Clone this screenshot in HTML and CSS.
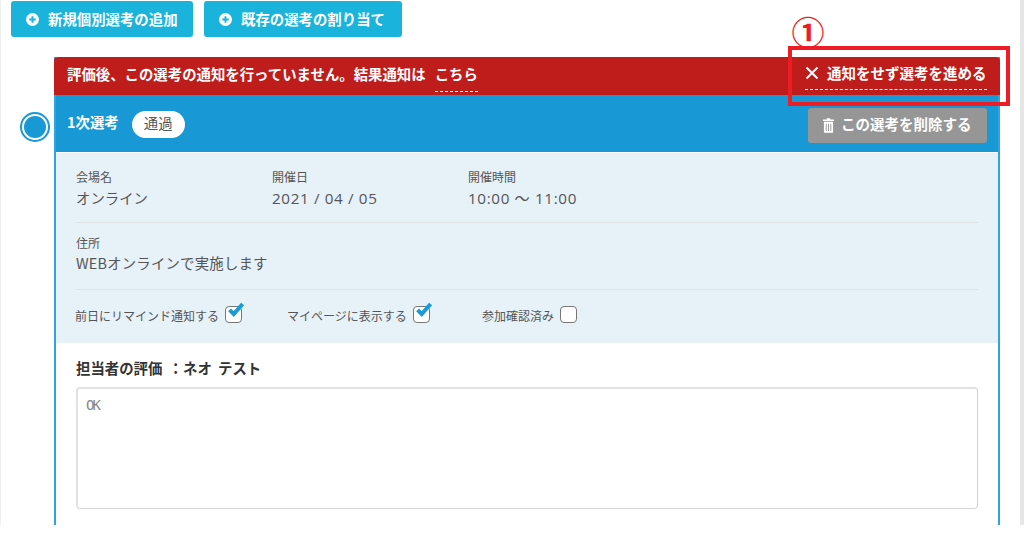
FILE: index.html
```html
<!DOCTYPE html>
<html lang="ja">
<head>
<meta charset="utf-8">
<title>選考</title>
<link rel="stylesheet" href="styles.css">
</head>
<body>
<div class="shot">
  <main class="page">
    <div class="actions">
      <button class="add-btn add-btn-first"><svg class="plus" viewBox="0 0 12 12"><circle cx="6" cy="6" r="6" fill="#fff"/><path d="M6 3v6M3 6h6" stroke="#1ab3dc" stroke-width="1.8"/></svg>新規個別選考の追加</button>
      <button class="add-btn add-btn-second"><svg class="plus" viewBox="0 0 12 12"><circle cx="6" cy="6" r="6" fill="#fff"/><path d="M6 3v6M3 6h6" stroke="#1ab3dc" stroke-width="1.8"/></svg>既存の選考の割り当て</button>
    </div>
    <div class="timeline">
      <div class="marker"><span class="marker-dot"></span></div>
      <section class="card">
        <header class="alert">
          <p class="alert-text">評価後、この選考の通知を行っていません。結果通知は<a class="dash-link alert-link">こちら</a></p>
          <a class="dash-link skip"><svg class="cross" viewBox="0 0 14 14"><path d="M1.5 1.5l11 11M12.5 1.5l-11 11" stroke="#fff" stroke-width="2" fill="none"/></svg>通知をせず選考を進める</a>
        </header>
        <div class="stage">
          <div class="stage-title"><strong class="stage-name">1次選考</strong><span class="pill">通過</span></div>
          <button class="delete"><svg class="trash" viewBox="0 0 12 16"><path d="M4 0h4v1.5h4V3H0V1.5h4zM1 4h10v12H1zM3 6v8h1V6zm2.500 0v8h1V6zM8 6v8h1V6z" fill="#fff" fill-rule="evenodd"/></svg><span class="delete-label">この選考を削除する</span></button>
        </div>
        <div class="details">
          <div class="row row-top">
            <div class="field field-venue"><span class="label">会場名</span><span class="value">オンライン</span></div>
            <div class="field field-date"><span class="label">開催日</span><span class="value value-num">2021 / 04 / 05</span></div>
            <div class="field"><span class="label">開催時間</span><span class="value value-num">10:00 ～ 11:00</span></div>
          </div>
          <div class="row row-address">
            <div class="field"><span class="label">住所</span><span class="value">WEBオンラインで実施します</span></div>
          </div>
          <div class="checks">
            <label class="check check-remind">前日にリマインド通知する<span class="box"><svg class="tick" viewBox="0 0 16 14"><path d="M3 6.500l3.500 3.500L14 1.500" stroke="#1a9ad6" stroke-width="3.4" fill="none"/></svg></span></label>
            <label class="check check-mypage">マイページに表示する<span class="box"><svg class="tick" viewBox="0 0 16 14"><path d="M3 6.500l3.500 3.500L14 1.500" stroke="#1a9ad6" stroke-width="3.4" fill="none"/></svg></span></label>
            <label class="check">参加確認済み<span class="box"></span></label>
          </div>
        </div>
        <div class="evaluation">
          <h2 class="eval-title">担当者の評価 ：ネオ テスト</h2>
          <div class="eval-box">OK</div>
        </div>
      </section>
    </div>
    <div class="note-number">①</div>
    <div class="note-frame"></div>
  </main>
  <div class="rail"></div>
</div>
</body>
</html>
```

FILE: styles.css
```css
* { box-sizing: border-box; }
html, body { margin: 0; padding: 0; background: #fff; }
body {
  width: 1024px;
  height: 545px;
  overflow: hidden;
  font-family: "Noto Sans CJK JP", "Noto Sans", "Liberation Sans", sans-serif;
  color: #444;
}
.shot {
  display: flex;
  height: 525px;
  overflow: hidden;
  border-left: 1px solid #efefef;
}
.page {
  position: relative;
  width: 1019px;
  flex: none;
}
.rail { width: 4px; background: #e6e6e6; flex: none; }

.actions {
  display: flex;
  gap: 11px;
  height: 37px;
  margin: 1px 0 0 10px;
}
.add-btn {
  display: flex;
  align-items: center;
  height: 36px;
  border: 0;
  border-radius: 3px;
  background: #1ab3dc;
  color: #fff;
  font: 700 14.4px/1 "Noto Sans CJK JP", sans-serif;
  padding: 0 0 0 15px;
}
.add-btn-first { width: 182px; }
.add-btn-second { width: 198px; }
.plus { width: 13px; height: 13px; margin-right: 9px; }

.timeline {
  display: flex;
  align-items: flex-start;
  margin-top: 19px;
  padding-left: 19px;
}
.marker {
  flex: none;
  width: 30px;
  height: 30px;
  margin: 55px 4px 0 0;
  border: 2px solid #1898d4;
  border-radius: 50%;
  background: #fff;
  padding: 2px;
}
.marker-dot {
  display: block;
  width: 22px;
  height: 22px;
  border-radius: 50%;
  background: #1898d4;
}
.card {
  width: 946px;
  flex: none;
  height: 480px;
  border-left: 2px solid #2ea4e0;
  border-right: 2px solid #2ea4e0;
}
.alert {
  display: flex;
  align-items: flex-start;
  justify-content: space-between;
  height: 38px;
  margin: 0 -2px;
  border-radius: 4px 4px 0 0;
  background: #bf1d1b;
  color: #fff;
  font-weight: 700;
  font-size: 14.4px;
  line-height: 20px;
  padding: 7px 13px 0 13px;
}
.alert-text { margin: 0; }
.dash-link {
  display: inline-flex;
  align-items: center;
  height: 26px;
  padding-bottom: 8px;
  border-bottom: 1px dashed #fff;
  color: #fff;
  white-space: nowrap;
}
.alert-link { margin-left: 9px; }
.skip { width: 182px; font-size: 14.5px; }
.cross { flex: none; width: 14px; height: 14px; margin-right: 8px; }

.stage {
  display: flex;
  align-items: flex-start;
  justify-content: space-between;
  height: 57px;
  background: #1898d4;
  padding: 12px 11px 0 11px;
}
.stage-title {
  display: flex;
  align-items: center;
  gap: 13px;
  height: 32px;
  color: #fff;
  font-size: 14.4px;
}
.stage-name { margin-bottom: 3px; font-size: 14.4px; }
.pill {
  display: block;
  width: 53px;
  height: 27px;
  margin-top: 2px;
  border-radius: 14px;
  background: #fff;
  color: #555;
  font-size: 14.4px;
  line-height: 23px;
  text-align: center;
}
.delete {
  display: flex;
  align-items: center;
  width: 179px;
  height: 35px;
  margin-top: 1px;
  border: 0;
  border-radius: 3px;
  background: #969696;
  color: #fff;
  font: 700 14.5px/1 "Noto Sans CJK JP", sans-serif;
  padding: 0 0 0 15px;
}
.delete-label { margin-bottom: 2px; }
.trash { width: 11px; height: 15px; margin-right: 7px; }

.details {
  height: 190px;
  margin-top: 1px;
  background: #e6f1f8;
  padding: 0 20px;
}
.row { display: flex; border-bottom: 1px solid #dfe3e5; }
.row-top { height: 70px; padding-top: 15px; }
.row-address { height: 67px; padding-top: 11px; }
.field { display: flex; flex-direction: column; }
.field-venue { width: 196px; }
.field-date { width: 196px; }
.label { font-size: 12px; line-height: 17px; color: #555; }
.value { font-size: 14.4px; line-height: 22px; margin-top: 2px; color: #555; }
.value-num { font-family: "Open Sans", "Noto Sans CJK JP", sans-serif; font-size: 15.2px; letter-spacing: 0.65px; }
.row-address .value { margin-top: 1px; letter-spacing: 0.2px; }
.checks { display: flex; padding-top: 15px; }
.check { display: flex; align-items: center; height: 20px; font-size: 12px; color: #555; margin-left: -1px; }
.check-remind { width: 213px; }
.check-mypage { width: 196px; }
.box {
  position: relative;
  width: 17px;
  height: 17px;
  margin: -1px 0 0 6px;
  border: 1.5px solid #777;
  border-radius: 4px;
  background: #fff;
}
.tick { position: absolute; left: 0; top: -5px; width: 19px; height: 17px; }

.evaluation { padding: 14px 20px 0 20px; }
.eval-title {
  margin: 0;
  font-size: 14.4px;
  font-weight: 700;
  line-height: 22px;
  color: #333;
  word-spacing: 3px;
}
.eval-box {
  height: 122px;
  margin-top: 8px;
  border: 1px solid #d4d4d4;
  border-top: 2px solid #e2e2e2;
  border-left: 2px solid #e2e2e2;
  border-radius: 4px;
  padding: 6px 8px;
  font: 14px/20px "DejaVu Sans Mono", monospace;
  letter-spacing: -2px;
  color: #888;
}

.note-number {
  position: absolute;
  left: 787px;
  top: 11px;
  width: 40px;
  font: 700 33px/40px "Noto Sans CJK JP", sans-serif;
  color: #ee1c25;
  text-align: center;
}
.note-frame {
  position: absolute;
  left: 787px;
  top: 46px;
  width: 222px;
  height: 60px;
  border: 4px solid #ee1c25;
}
```
